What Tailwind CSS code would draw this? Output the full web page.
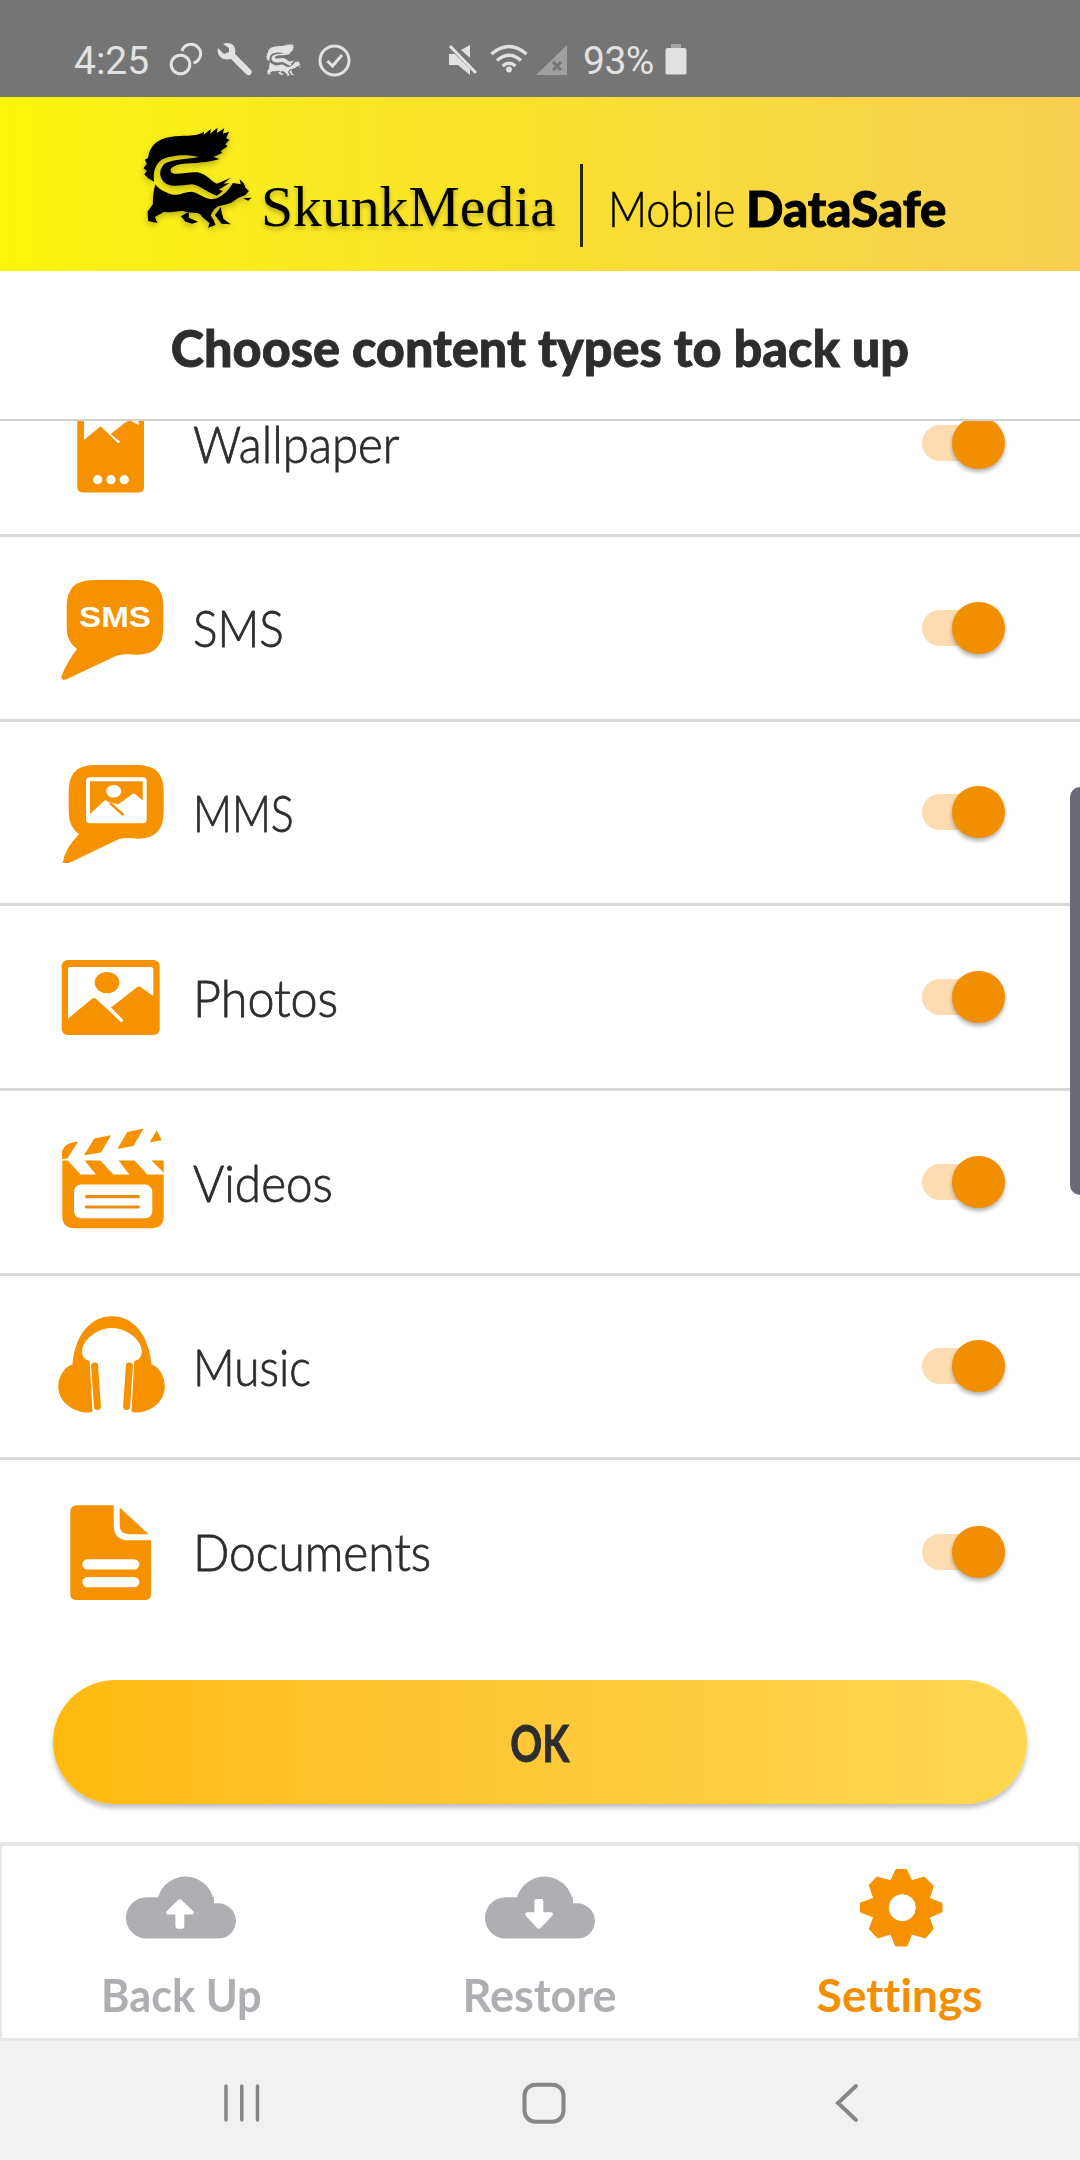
<!DOCTYPE html>
<html lang="en">
<head>
    <meta charset="UTF-8">
    <meta name="viewport" content="width=device-width, initial-scale=1.0">
    <title>SkunkMedia Mobile DataSafe</title>
    <script src="https://cdn.jsdelivr.net/npm/@tailwindcss/browser@4"></script>
</head>
<body class="bg-white overflow-hidden">
<div class="relative w-[1080px] h-[2160px] flex flex-col overflow-hidden font-['Lato',sans-serif] text-[#2d2d2d]">

    <!-- Status bar -->
    <div class="h-[97px] shrink-0 bg-[#757575] flex items-center pt-[23px] pl-[74px] text-[#e2e2e2] font-['Roboto',sans-serif] text-[39px]">
        <span class="w-[91px] pt-[2px]">4:25</span>
        <svg class="w-[40px] h-[40px]" viewBox="0 0 40 40" fill="none" stroke="currentColor" stroke-width="3">
            <circle cx="15.5" cy="24.5" r="9.3"/>
            <path d="M17 11 A9.5 9.5 0 1 1 28.5 23"/>
        </svg>
        <svg class="w-[36px] h-[40px] ml-[12px]" viewBox="0 0 36 40">
            <path fill="currentColor" d="M1 8 L7 14 L12 12 L12 8 L6 4 C14 1 20 6 18 14 L34 30 Q36 33 33 35 Q31 36 29 34 L14 19 C6 21 -1 16 1 8Z"/>
        </svg>
        <svg class="w-[38px] h-[36px] ml-[12px]" viewBox="60 40 350 330" preserveAspectRatio="none" fill="currentColor">
            <use href="#skunk"/>
        </svg>
        <svg class="w-[36px] h-[40px] ml-[13px]" viewBox="0 0 36 40" fill="none" stroke="currentColor" stroke-width="3">
            <circle cx="18.5" cy="20.5" r="14.5"/>
            <path d="M11.500 21 L16.500 26 L26 15"/>
        </svg>
        <svg class="w-[32px] h-[40px] ml-[95px]" viewBox="0 0 32 40" fill="currentColor">
            <path d="M2 14 H8 L23 29 V35 L11 25 H2Z"/>
            <path d="M14 10 L23 5 V18Z"/>
            <path d="M3 6 L29 33" stroke="currentColor" stroke-width="3"/>
        </svg>
        <svg class="w-[38px] h-[40px] ml-[11px]" viewBox="0 0 38 40" fill="none" stroke="currentColor" stroke-width="3.200">
            <path d="M1.500 14 Q19 -1 36.500 14"/>
            <path d="M7 20.500 Q19 10 31 20.500"/>
            <path d="M12.500 26 Q19 20.500 25.500 26"/>
            <circle cx="19" cy="29.500" r="1.300"/>
        </svg>
        <svg class="w-[32px] h-[40px] ml-[8px]" viewBox="0 0 32 40">
            <path d="M0 35 L31 5 V35Z" fill="#9f9f9f"/>
            <path d="M17 22 L25 30 M25 22 L17 30" stroke="#757575" stroke-width="3"/>
        </svg>
        <span class="ml-[15px] w-[82px] pt-[2px] tracking-[-0.5px]">93%</span>
        <svg class="w-[22px] h-[40px]" viewBox="0 0 22 40">
            <path d="M6 4 H16 V8 H6Z" fill="#a5a5a5"/>
            <rect x="0.500" y="8" width="21" height="26.500" rx="2" fill="currentColor"/>
        </svg>
    </div>

    <!-- Brand header -->
    <header class="h-[174px] shrink-0 flex items-start pl-[140px] text-black bg-linear-to-r from-[#fbf508] via-[#f9e02c] to-[#f8cf52]">
        <svg class="w-[117px] h-[110px] mt-[26px] drop-shadow-[0_3px_3px_rgba(0,0,0,0.25)]" viewBox="60 40 350 330">
            <g id="skunk">
                <path d="M102 216 L84 206 L72 194 L80 184 L70 176 L80 162 L74 150 L84 144 C88 110 110 88 150 82 C190 74 225 84 252 66 L250 76 L272 58 L270 72 L292 54 L290 70 L312 56 L308 72 L327 66 L318 86 L328 90 L316 104 L322 110 L302 124 L306 130 L280 142 L298 148 C262 160 220 160 190 162 C160 166 148 176 152 186 C160 200 200 186 232 188 C262 194 270 214 290 222 L332 204 L310 222 L328 220 L296 240 L308 244 L290 258 C262 250 240 226 214 224 C186 226 160 234 138 222 C116 206 116 184 128 168 C140 150 190 150 236 142 C200 132 150 136 124 150 C104 164 98 190 102 216Z"/>
                <path d="M106 224 C100 240 98 262 98 284 L82 306 L84 334 L112 340 L104 322 L132 306 C160 312 178 300 196 306 C220 312 240 304 246 322 L268 340 L264 354 L286 346 L280 330 L272 318 C276 304 286 292 300 288 C330 284 340 276 352 266 L376 256 L386 244 L376 234 L372 222 L358 208 L362 224 L338 220 C326 240 312 256 290 266 C262 276 240 252 216 246 C190 246 176 260 152 254 C130 246 112 236 106 224Z"/>
                <path d="M182 320 L206 306 L206 324 L234 336 L216 342 L196 336Z"/>
                <path d="M302 292 L284 316 L304 342 L332 344 L310 328 L304 306Z"/>
                <path d="M368 266 L394 264 L384 273Z"/>
            </g>
        </svg>
        <span class="mt-[78px] ml-[4px] w-[319px] origin-left scale-x-[1.03] -mr-0 whitespace-nowrap font-['Liberation_Serif',serif] text-[56px] leading-[64px] [text-shadow:0_3px_4px_rgba(0,0,0,0.25)]">SkunkMedia</span>
        <div class="mt-[67px] w-[3px] h-[83px] bg-[#2a2508]"></div>
        <div class="mt-[81px] ml-[25px] text-[50px] leading-[60px] whitespace-nowrap flex">
            <span class="w-[138px] origin-left scale-x-[0.86] font-light [-webkit-text-stroke:0.5px_currentColor]">Mobile</span>
            <span class="font-black origin-left scale-x-[0.985] [-webkit-text-stroke:1px_currentColor]">DataSafe</span>
        </div>
    </header>

    <!-- Page title -->
    <div class="h-[150px] shrink-0 border-b-2 border-[#d0d0d0] flex items-center justify-center">
        <h1 class="text-[51px] font-black whitespace-nowrap pt-[7px] scale-x-[0.987] [-webkit-text-stroke:0.8px_currentColor]">Choose content types to back up</h1>
    </div>

    <!-- Content types, scrolled so that the first row is cut off -->
    <div class="h-[1224px] shrink-0 overflow-hidden flex flex-col justify-end text-[51px] font-light [-webkit-text-stroke:0.8px_currentColor]">
        <div class="h-[184.7px] shrink-0 border-b-3 border-[#d9d9d9] flex items-center pl-[50px] pr-[75px]">
            <svg class="w-[120px] h-[120px]" viewBox="0 0 120 120" fill="#f69200">
                <rect x="27.300" y="4" width="66.700" height="105.400" rx="5"/>
                <path fill="#fff" d="M34 14 H88.700 V42 L82 38.500 Q79 37 76 39 L60.700 51 L70 58.500 L68.500 60.500 L52 44.500 Q50.500 43 49 44.500 L34 57Z"/>
                <g fill="#fff"><circle cx="47.700" cy="96.700" r="4.600"/><circle cx="61" cy="96.700" r="4.600"/><circle cx="74.300" cy="96.700" r="4.600"/></g>
            </svg>
            <span class="ml-[23px] pt-[2px] origin-left scale-x-[0.93]">Wallpaper</span>
            <div class="ml-auto relative w-[83px] h-[52px] flex items-center">
                <div class="w-[72px] h-[36px] rounded-full bg-[#fcdcb0]"></div>
                <div class="absolute right-0 w-[53px] h-[52px] rounded-full bg-[#f28f00] shadow-[0_3px_4px_rgba(0,0,0,0.3)]"></div>
            </div>
        </div>
        <div class="h-[184.7px] shrink-0 border-b-3 border-[#d9d9d9] flex items-center pl-[50px] pr-[75px]">
            <svg class="w-[120px] h-[120px]" viewBox="0 0 120 120" fill="#f69200">
                <path d="M43 12 H87 Q113.300 12 113.300 38 V60 Q113.300 86.700 87 86.700 Q75 85.500 67 87.500 L17 111 Q10 113.500 12 107 Q17 94 27 81 Q16.700 74 16.700 60 V38 Q16.700 12 43 12Z"/>
                <text x="29" y="59" fill="#fff" class="font-['Liberation_Sans',sans-serif] font-bold text-[29px] [-webkit-text-stroke:1.2px_#fff]" textLength="72" lengthAdjust="spacingAndGlyphs">SMS</text>
            </svg>
            <span class="ml-[23px] pt-[2px] origin-left scale-x-[0.9]">SMS</span>
            <div class="ml-auto relative w-[83px] h-[52px] flex items-center">
                <div class="w-[72px] h-[36px] rounded-full bg-[#fcdcb0]"></div>
                <div class="absolute right-0 w-[53px] h-[52px] rounded-full bg-[#f28f00] shadow-[0_3px_4px_rgba(0,0,0,0.3)]"></div>
            </div>
        </div>
        <div class="h-[184.7px] shrink-0 border-b-3 border-[#d9d9d9] flex items-center pl-[50px] pr-[75px]">
            <svg class="w-[120px] h-[120px]" viewBox="0 0 120 120" fill="#f69200">
                <path d="M44 13 H88 Q113.700 13 113.700 39 V60 Q113.700 86.700 88 86.700 Q76 85 69 87 L19 111 H12.700 Q14 98 29 82 Q18.700 75 18.700 60 V39 Q18.700 13 44 13Z"/>
                <rect x="36" y="25.300" width="60.700" height="46" rx="4" fill="#fff"/>
                <path d="M40 29.300 H92.700 V48.500 L85 42 Q84 41 82.500 42 L67.300 53 L74 61.500 L72.500 63.500 L57 49 Q55.500 47.500 54 49 L40 62Z"/>
                <path d="M58 49.500 L68 52.500 L77 63 V66 Z" fill="#fff"/>
                <path d="M60 51 L73.500 63" stroke="#f69200" stroke-width="2.500"/>
                <ellipse cx="63.700" cy="39.300" rx="7.500" ry="6.300" fill="#fff"/>
            </svg>
            <span class="ml-[23px] pt-[2px] origin-left scale-x-[0.84]">MMS</span>
            <div class="ml-auto relative w-[83px] h-[52px] flex items-center">
                <div class="w-[72px] h-[36px] rounded-full bg-[#fcdcb0]"></div>
                <div class="absolute right-0 w-[53px] h-[52px] rounded-full bg-[#f28f00] shadow-[0_3px_4px_rgba(0,0,0,0.3)]"></div>
            </div>
        </div>
        <div class="h-[184.7px] shrink-0 border-b-3 border-[#d9d9d9] flex items-center pl-[50px] pr-[75px]">
            <svg class="w-[120px] h-[120px]" viewBox="0 0 120 120" fill="#f69200">
                <rect x="11.700" y="23" width="98" height="75" rx="6"/>
                <path fill="#fff" d="M20 30 H101 Q103.300 30 103.300 32 V59 L91 50.200 Q89 49 87 50.200 L61 70.600 L73.300 83 L71.500 85.500 L46 61.800 Q44 60 42 61.800 L18 81.700 V32 Q18 30 20 30Z"/>
                <ellipse cx="57" cy="45.600" rx="12.300" ry="10.700"/>
            </svg>
            <span class="ml-[23px] pt-[2px] origin-left scale-x-[0.95]">Photos</span>
            <div class="ml-auto relative w-[83px] h-[52px] flex items-center">
                <div class="w-[72px] h-[36px] rounded-full bg-[#fcdcb0]"></div>
                <div class="absolute right-0 w-[53px] h-[52px] rounded-full bg-[#f28f00] shadow-[0_3px_4px_rgba(0,0,0,0.3)]"></div>
            </div>
        </div>
        <div class="h-[184.7px] shrink-0 border-b-3 border-[#d9d9d9] flex items-center pl-[50px] pr-[75px]">
            <svg class="w-[120px] h-[120px]" viewBox="0 0 120 120" fill="#f69200">
                <path d="M12 37 V29 Q15 20.500 28.300 19.600 L17.300 36.600Z M34 33.300 L44.300 16.600 L61 13.300 L51 30.600Z M67.300 27 L77.300 10 L93.700 6.600 L83.300 24Z M99.700 20.300 L106.700 8.300 L111.700 18.300Z"/>
                <path d="M12.300 38.600 H113.700 V94 Q113.700 106.300 101 106.300 H25 Q12.300 106.300 12.300 94Z"/>
                <path fill="#fff" d="M17.300 38 H34.300 L46 52.600 H30.700Z M50 38 H68.300 L79.300 52.600 H63.300Z M84 38 H101 L114 51 V52.600 H97.300Z"/>
                <rect x="24" y="62.600" width="78.300" height="33.700" rx="7" fill="#fff"/>
                <path d="M36.500 74.600 H88.500 M36.500 85 H88.500" stroke="#e88d0c" stroke-width="3.200" stroke-linecap="round"/>
            </svg>
            <span class="ml-[23px] pt-[2px] origin-left scale-x-[0.935]">Videos</span>
            <div class="ml-auto relative w-[83px] h-[52px] flex items-center">
                <div class="w-[72px] h-[36px] rounded-full bg-[#fcdcb0]"></div>
                <div class="absolute right-0 w-[53px] h-[52px] rounded-full bg-[#f28f00] shadow-[0_3px_4px_rgba(0,0,0,0.3)]"></div>
            </div>
        </div>
        <div class="h-[184.7px] shrink-0 border-b-3 border-[#d9d9d9] flex items-center pl-[50px] pr-[75px]">
            <svg class="w-[120px] h-[120px]" viewBox="0 0 120 120" fill="#f69200">
                <path d="M38.300 55 L41.300 105.600 Q40 106.600 34 106.600 C20 105 5 96 5 80 C5 70 13 60 20 58.500 C23 28 40 10.200 62 10.200 C84 10.200 101 28 104 58.500 C111 60 118 70 118 80 C118 96 104 105 90 106.600 Q84 106.600 82.700 105.600 L85.700 55 Q93.700 53 93.700 46 C93.700 34 78 22 62 22 C46 22 30.300 34 30.300 46 Q30.300 53 38.300 55Z" transform="translate(3.500 0) scale(0.943 1)"/>
                <path d="M44.600 60 L47.400 100.500 M79.400 60 L76.600 100.500" stroke="#f69200" stroke-width="7" stroke-linecap="round"/>
            </svg>
            <span class="ml-[23px] pt-[2px] origin-left scale-x-[0.9]">Music</span>
            <div class="ml-auto relative w-[83px] h-[52px] flex items-center">
                <div class="w-[72px] h-[36px] rounded-full bg-[#fcdcb0]"></div>
                <div class="absolute right-0 w-[53px] h-[52px] rounded-full bg-[#f28f00] shadow-[0_3px_4px_rgba(0,0,0,0.3)]"></div>
            </div>
        </div>
        <div class="h-[184.7px] shrink-0 flex items-center pl-[50px] pr-[75px] pb-[2px]">
            <svg class="w-[120px] h-[120px]" viewBox="0 0 120 120" fill="#f69200">
                <path d="M27 13.200 H63.700 V34 Q64 48.200 78.300 48.200 H101 V102 Q101 108 95 108 H26.500 Q20.300 108 20.300 102 V20 Q20.300 13.200 27 13.200Z"/>
                <path d="M69.700 15.500 L98.500 42.200 H79 Q69.700 42.200 69.700 33Z"/>
                <rect x="32.300" y="67.200" width="57" height="10.300" rx="5.150" fill="#fff"/>
                <rect x="32.300" y="84.900" width="57" height="10.300" rx="5.150" fill="#fff"/>
            </svg>
            <span class="ml-[23px] pt-[2px] origin-left scale-x-[0.94]">Documents</span>
            <div class="ml-auto relative w-[83px] h-[52px] flex items-center">
                <div class="w-[72px] h-[36px] rounded-full bg-[#fcdcb0]"></div>
                <div class="absolute right-0 w-[53px] h-[52px] rounded-full bg-[#f28f00] shadow-[0_3px_4px_rgba(0,0,0,0.3)]"></div>
            </div>
        </div>
    </div>

    <div class="h-[197px] shrink-0 px-[53px] pt-[35px]">
        <button class="w-full h-[124px] rounded-full bg-linear-to-r from-[#ffb90c] to-[#ffd750] shadow-[0_4px_5px_rgba(0,0,0,0.25)] text-[52px] font-bold">
            <span class="inline-block scale-x-[0.76] [-webkit-text-stroke:1px_currentColor]">OK</span>
        </button>
    </div>

    <!-- Tabs -->
    <nav class="h-[199px] shrink-0 border-2 border-t-4 border-b-3 border-[#e6e6e6] grid grid-cols-3 text-[46px] leading-[56px] font-bold text-[#afaeb3]">
        <div class="flex flex-col items-center pt-[16px]">
            <svg class="w-[120px] h-[90px]" viewBox="0 0 120 90" fill="#afaeb3">
                <path d="M25.600 76.600 A20.650 20.650 0 0 1 25.600 35.300 H93 V41.300 H97.300 A17.650 17.650 0 0 1 97.300 76.600Z"/>
                <circle cx="64.500" cy="43" r="28.500"/>
                <path fill="#fff" d="M57 38 Q58.800 36.500 60.600 38 L72.500 49.500 Q73.500 52.500 71 52.500 H63.300 V64 Q63.300 66.700 61 66.700 H56.500 Q54.400 66.700 54.400 64 V52.500 H47 Q44 52 45.500 49.500Z"/>
            </svg>
            <span class="mt-[15px] scale-x-[0.94]">Back Up</span>
        </div>
        <div class="flex flex-col items-center pt-[16px]">
            <svg class="w-[120px] h-[90px]" viewBox="0 0 120 90" fill="#afaeb3">
                <path d="M25.600 76.600 A20.650 20.650 0 0 1 25.600 35.300 H93 V41.300 H97.300 A17.650 17.650 0 0 1 97.300 76.600Z"/>
                <circle cx="64.500" cy="43" r="28.500"/>
                <path fill="#fff" d="M57 66 Q58.800 67.500 60.600 66 L72.500 53.500 Q73.500 50.500 71 50.300 H63.300 V39 Q63.300 37 61 37 H56.500 Q54.400 37 54.400 39 V50.300 H47 Q44 51 45.500 53.500Z"/>
            </svg>
            <span class="mt-[15px] scale-x-[0.98]">Restore</span>
        </div>
        <div class="flex flex-col items-center pt-[16px] text-[#f28f00]">
            <svg class="w-[120px] h-[90px] ml-[2px]" viewBox="0 0 120 90" fill="#f69200">
                <path fill-rule="evenodd" stroke="#f69200" stroke-width="1" stroke-linejoin="round" d="M56 7.500 H66.500 L71.700 18.700 L84.300 15 L93.300 24 L89.300 36.300 L102 41.300 V50 L89.300 55.300 L93.300 67 L85.300 76 L71.700 72 L67 84 H55.700 L50.700 72 L37.700 76 L29.300 67 L33.700 55.300 L20.500 50 V41 L33.700 36.300 L29.300 23.300 L36.700 15 L50.700 18.700Z M76.300 45.700 A14 14 0 1 0 48.300 45.700 A14 14 0 1 0 76.300 45.700Z"/>
            </svg>
            <span class="mt-[15px] ml-[2px] [font-variant-ligatures:none]">Settings</span>
        </div>
    </nav>

    <!-- System navigation -->
    <div class="grow bg-[#f1f1f1] flex items-center pl-[222px] pb-[6px] pt-[10px]">
        <svg class="w-[40px] h-[44px]" viewBox="0 0 40 44" stroke="#868686" stroke-width="3.500" stroke-linecap="round">
            <path d="M4 5 V39 M19.800 5 V39 M35.500 5 V39"/>
        </svg>
        <svg class="w-[44px] h-[44px] ml-[260px]" viewBox="0 0 44 44" fill="none" stroke="#868686" stroke-width="4">
            <rect x="2.500" y="3.700" width="39" height="37" rx="11"/>
        </svg>
        <svg class="w-[26px] h-[44px] ml-[268px]" viewBox="0 0 26 44" fill="none" stroke="#868686" stroke-width="4" stroke-linecap="round">
            <path d="M22 5 L4 22 L22 39"/>
        </svg>
    </div>

    <!-- Edge panel handle -->
    <div class="absolute right-0 top-[787px] w-[10px] h-[408px] rounded-l-[10px] bg-[#6b6976]"></div>
</div>
</body>
</html>
